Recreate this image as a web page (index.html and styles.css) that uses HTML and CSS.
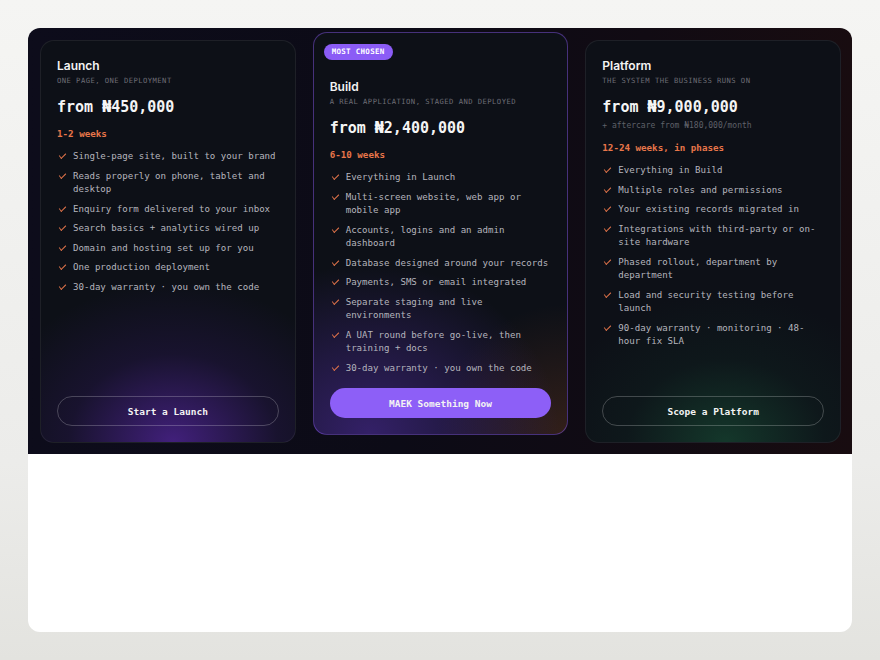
FILE: index.html
```html
<!DOCTYPE html>
<html lang="en">
<head>
    <meta charset="UTF-8">
    <meta name="viewport" content="width=device-width, initial-scale=1.0">
    <title>Pricing</title>
    <link rel="stylesheet" href="styles.css">
</head>
<body>
    <main class="sheet">
        <section class="pricing">
            <article class="plan plan-launch">
                <h2 class="plan-name">Launch</h2>
                <p class="plan-tag">ONE PAGE, ONE DEPLOYMENT</p>
                <p class="plan-price">from ₦450,000</p>
                <p class="plan-time">1-2 weeks</p>
                <ul class="plan-list">
                    <li>Single-page site, built to your brand</li>
                    <li>Reads properly on phone, tablet and desktop</li>
                    <li>Enquiry form delivered to your inbox</li>
                    <li>Search basics + analytics wired up</li>
                    <li>Domain and hosting set up for you</li>
                    <li>One production deployment</li>
                    <li>30-day warranty · you own the code</li>
                </ul>
                <button class="plan-btn">Start a Launch</button>
            </article>

            <article class="plan plan-build">
                <span class="badge">MOST CHOSEN</span>
                <h2 class="plan-name">Build</h2>
                <p class="plan-tag">A REAL APPLICATION, STAGED AND DEPLOYED</p>
                <p class="plan-price">from ₦2,400,000</p>
                <p class="plan-time">6-10 weeks</p>
                <ul class="plan-list">
                    <li>Everything in Launch</li>
                    <li>Multi-screen website, web app or mobile app</li>
                    <li>Accounts, logins and an admin dashboard</li>
                    <li>Database designed around your records</li>
                    <li>Payments, SMS or email integrated</li>
                    <li>Separate staging and live environments</li>
                    <li>A UAT round before go-live, then training + docs</li>
                    <li>30-day warranty · you own the code</li>
                </ul>
                <button class="plan-btn plan-btn-solid">MAEK Something Now</button>
            </article>

            <article class="plan plan-platform">
                <h2 class="plan-name">Platform</h2>
                <p class="plan-tag">THE SYSTEM THE BUSINESS RUNS ON</p>
                <p class="plan-price">from ₦9,000,000</p>
                <p class="plan-note">+ aftercare from ₦180,000/month</p>
                <p class="plan-time">12-24 weeks, in phases</p>
                <ul class="plan-list">
                    <li>Everything in Build</li>
                    <li>Multiple roles and permissions</li>
                    <li>Your existing records migrated in</li>
                    <li>Integrations with third-party or on-site hardware</li>
                    <li>Phased rollout, department by department</li>
                    <li>Load and security testing before launch</li>
                    <li>90-day warranty · monitoring · 48-hour fix SLA</li>
                </ul>
                <button class="plan-btn">Scope a Platform</button>
            </article>
        </section>
    </main>
</body>
</html>
```

FILE: styles.css
```css
body {
    margin: 0;
    padding: 28px;
    min-height: 660px;
    box-sizing: border-box;
    background: linear-gradient(180deg, #f5f5f3 0%, #ececea 70%, #e3e3df 100%);
    font-family: "DejaVu Sans Mono", "Liberation Mono", monospace;
}
.sheet {
    height: 604px;
    background: #ffffff;
    border-radius: 12px;
    overflow: hidden;
}
.pricing {
    display: grid;
    grid-template-columns: repeat(3, 1fr);
    gap: 17px;
    padding: 12px 11px 11px 12px;
    background: linear-gradient(90deg, #0d0c1b 0%, #0c0b16 45%, #110b13 75%, #180c10 100%);
}
.plan {
    position: relative;
    display: flex;
    flex-direction: column;
    height: 403px;
    box-sizing: border-box;
    padding: 16px 16px 16px;
    border: 1px solid rgba(255, 255, 255, 0.07);
    border-radius: 14px;
    background-color: #0d1017;
    background-repeat: no-repeat;
}
.plan-launch {
    background-image: radial-gradient(ellipse 190px 160px at 52% 100%, rgba(108, 45, 205, 0.55), rgba(70, 30, 140, 0.2) 55%, transparent 100%);
}
.plan-build {
    transform: translateY(-8px);
    padding-top: 45px;
    border-color: rgba(139, 92, 246, 0.45);
    background-image:
        radial-gradient(ellipse 190px 170px at 22% 100%, rgba(105, 55, 215, 0.42), transparent 100%),
        radial-gradient(ellipse 130px 130px at 100% 100%, rgba(120, 60, 30, 0.35), transparent 100%);
}
.plan-platform {
    background-image: radial-gradient(ellipse 180px 150px at 55% 100%, rgba(30, 110, 70, 0.42), rgba(20, 70, 50, 0.14) 55%, transparent 100%);
}
.badge {
    position: absolute;
    top: 11px;
    left: 10px;
    padding: 0 8px;
    height: 16px;
    line-height: 16px;
    border-radius: 8px;
    background: #8b5cf6;
    color: #ffffff;
    font-size: 7.5px;
    font-weight: bold;
    letter-spacing: 0.3px;
}
.plan-name {
    margin: 0;
    font-family: Inter, "Noto Sans", sans-serif;
    font-size: 12px;
    font-weight: 600;
    line-height: 18px;
    color: #f3f3f3;
}
.plan-tag {
    margin: 0;
    font-size: 7.2px;
    line-height: 12px;
    letter-spacing: 0.45px;
    color: #6c6c75;
}
.plan-price {
    margin: 10px 0 0;
    font-size: 15px;
    font-weight: bold;
    line-height: 20px;
    color: #f5f5f5;
}
.plan-note {
    margin: 3px 0 0;
    font-size: 8px;
    line-height: 12px;
    color: #5f6069;
}
.plan-time {
    margin: 10px 0 0;
    font-size: 9.2px;
    font-weight: bold;
    line-height: 14px;
    color: #e8764a;
}
.plan-platform .plan-time {
    margin-top: 9px;
}
.plan-list {
    list-style: none;
    margin: 9px 0 0;
    padding: 0;
    display: flex;
    flex-direction: column;
    gap: 6px;
}
.plan-list li {
    position: relative;
    padding-left: 16px;
    font-size: 9.1px;
    line-height: 13.5px;
    color: #b5b5bd;
}
/* orange tick drawn with borders */
.plan-list li::before {
    content: "";
    position: absolute;
    left: 2px;
    top: 3px;
    width: 6px;
    height: 3px;
    border-left: 1.2px solid #e0734a;
    border-bottom: 1.2px solid #e0734a;
    transform: rotate(-45deg) skewX(-8deg);
}
.plan-btn {
    margin-top: auto;
    height: 30px;
    border: 1px solid rgba(255, 255, 255, 0.22);
    border-radius: 15px;
    background: transparent;
    color: #f3f3f3;
    font-family: "DejaVu Sans Mono", "Liberation Mono", monospace;
    font-size: 9.5px;
    font-weight: bold;
    cursor: pointer;
}
.plan-btn-solid {
    border: none;
    background: #8d5ff7;
}
```
